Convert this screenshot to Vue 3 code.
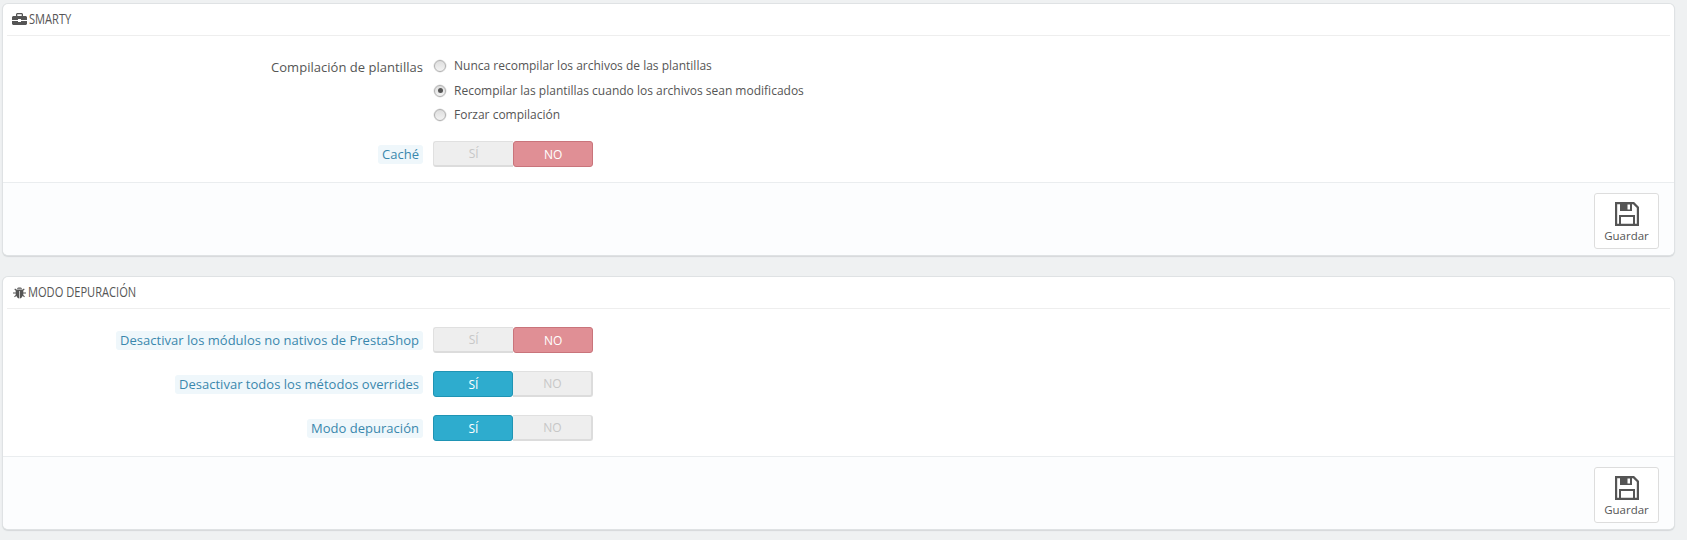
<script setup>
const forms = [
  {
    title: 'SMARTY', icon: 'case', formHeight: 'smarty',
    rows: [
      { label: 'Compilación de plantillas', radios: ['Nunca recompilar los archivos de las plantillas', 'Recompilar las plantillas cuando los archivos sean modificados', 'Forzar compilación'], selected: 1 },
      { label: 'Caché', hint: true, on: false },
    ],
  },
  {
    title: 'MODO DEPURACIÓN', icon: 'bug', formHeight: 'debug',
    rows: [
      { label: 'Desactivar los módulos no nativos de PrestaShop', hint: true, on: false },
      { label: 'Desactivar todos los métodos overrides', hint: true, on: true },
      { label: 'Modo depuración', hint: true, on: true },
    ],
  },
]
</script>

<template>
  <div class="page">
    <section v-for="f in forms" :key="f.title" class="panel">
      <header class="head">
        <svg v-if="f.icon === 'case'" class="hicon" viewBox="0 0 15 12" width="15" height="12">
          <path fill="#555" d="M5 0h5l1 1v2h3l1 1v3H9V6H6v1H0V4l1-1h3V1zM5.300 1.200V3h4.400V1.200zM0 8h6v1h3V8h6v3l-1 1H1l-1-1z"/>
        </svg>
        <svg v-else class="hicon bug" viewBox="0 0 12 12" width="13" height="13">
          <path fill="#555" d="M3.500 2.500C4 1 8 1 8.500 2.500zM3 3.300h6l1-1 .8.700L9.500 4.300V6H12v1H9.500v1.200L11 9.700l-.8.700L9 9c-.5 1.500-1.800 2.500-2.700 2.600V4.500h-.6v7.100C4.800 11.500 3.500 10.500 3 9l-1.200 1.400-.8-.7 1.500-1.500V7H0V6h2.500V4.300L1.200 3 2 2.300z"/>
        </svg>
        <span class="title">{{ f.title }}</span>
      </header>
      <div class="body" :class="f.formHeight">
        <div v-for="r in f.rows" :key="r.label" class="row" :class="{ radiorow: r.radios }">
          <div class="labelcol"><span class="label" :class="{ hint: r.hint }">{{ r.label }}</span></div>
          <div v-if="r.radios" class="radios">
            <label v-for="(t, i) in r.radios" :key="t" class="radio">
              <span class="dot" :class="{ sel: i === r.selected }"></span>{{ t }}
            </label>
          </div>
          <div v-else class="switch">
            <span class="seg" :class="r.on ? 'yes' : 'off offr'">SÍ</span>
            <span class="seg" :class="r.on ? 'off offl' : 'no'">NO</span>
          </div>
        </div>
      </div>
      <footer class="foot">
        <button class="save" type="button">
          <svg viewBox="0 0 24 24" width="24" height="24">
            <path fill="none" stroke="#555" stroke-width="2.200" d="M1.100 1.100h17.500l4.300 4.300v17.500H1.100z"/>
            <path fill="#555" d="M5 1h12v8H5z"/>
            <path fill="#fff" d="M12.500 2.500h2.500v5h-2.500z"/>
            <path fill="none" stroke="#555" stroke-width="2" d="M5 22.500V14h14v8.500"/>
          </svg>
          <span>Guardar</span>
        </button>
      </footer>
    </section>
  </div>
</template>

<style>
html, body { margin: 0; background: #eff1f2; }
</style>

<style scoped>
.page {
  height: 540px;
  box-sizing: border-box;
  padding: 4px 13px 0 3px;
  font-family: "Open Sans", sans-serif;
  color: #555;
  overflow: hidden;
}
.panel {
  background: #fff;
  border-radius: 5px;
  box-shadow: 0 0 0 1px #dfe2e4, 0 1px 1px 1px #d5d8da;
  margin-bottom: 22px;
  overflow: hidden;
}
.head {
  height: 31px;
  margin: 0 4px;
  padding-left: 5px;
  border-bottom: 1px solid #eee;
  display: flex;
  align-items: center;
  gap: 2px;
}
.hicon { flex: none; margin-top: -1px; }
.hicon.bug { margin-left: 1px; }
.title {
  font-size: 15px;
  color: #555;
  display: inline-block;
  margin-top: -3px;
  transform: scaleX(0.74);
  transform-origin: left center;
  white-space: nowrap;
}
.body { box-sizing: border-box; }
.body.smarty { height: 146px; padding-top: 20px; }
.body.debug { height: 147px; padding-top: 18px; }
.row {
  display: flex;
  align-items: center;
  height: 26px;
  margin-bottom: 18px;
}
.radiorow { align-items: flex-start; height: auto; margin-bottom: 15.500px; }
.labelcol {
  width: 420px;
  flex: none;
  text-align: right;
  font-size: 13px;
  letter-spacing: 0.020px;
}
.label { padding: 0 4px 1px; line-height: 18px; display: inline-block; vertical-align: middle; }
.radiorow .label { padding: 1px 0 0; }
.hint {
  background: #eff7fb;
  color: #3a87ad;
  border-radius: 3px;
}
.radios {
  margin-left: 10px;
  display: flex;
  flex-direction: column;
  gap: 4px;
}
.radio {
  display: flex;
  align-items: center;
  font-size: 12px;
  line-height: 20.500px;
  color: #555;
}
.dot {
  width: 10px;
  height: 10px;
  border-radius: 50%;
  border: 1px solid #b0b0b0;
  box-shadow: 0 0 0 0.500px #ddd;
  background: linear-gradient(#dedede, #f3f3f3);
  margin-right: 8px;
  margin-left: 1px;
  flex: none;
  position: relative;
}
.dot.sel::after {
  content: "";
  position: absolute;
  left: 2.500px;
  top: 2.500px;
  width: 5px;
  height: 5px;
  border-radius: 50%;
  background: #555;
}
.switch {
  margin-left: 10px;
  display: flex;
  width: 160px;
  height: 26px;
  border-radius: 3px;
  box-sizing: border-box;
}
.seg {
  flex: 1;
  display: flex;
  align-items: center;
  justify-content: center;
  font-size: 12px;
  box-sizing: border-box;
  padding-left: 1px;
}
.off {
  background: #eee;
  color: #c7c7c7;
  border-top: 1px solid #e0e0e0;
  border-bottom: 2px solid #dcdcdc;
}
.offr { border-left: 1px solid #e0e0e0; border-radius: 3px 0 0 3px; }
.offl { border-right: 2px solid #dcdcdc; border-radius: 0 3px 3px 0; }
.no {
  background: #e08f95;
  color: #fff;
  border: 1px solid #c9747b;
  border-radius: 3px;
}
.yes {
  background: #2eacce;
  color: #fff;
  border: 1px solid #1f94b4;
  border-radius: 3px;
}
.foot {
  height: 73px;
  box-sizing: border-box;
  background: #fcfdfe;
  border-top: 1px solid #eaedef;
  display: flex;
  justify-content: flex-end;
  align-items: flex-start;
  padding: 10px 15px 0 0;
}
.save {
  width: 65px;
  height: 56px;
  box-sizing: border-box;
  background: #fff;
  border: 1px solid #ddd;
  border-radius: 3px;
  padding: 8px 0 0;
  display: flex;
  flex-direction: column;
  align-items: center;
  gap: 2px;
  font-family: "Open Sans", sans-serif;
  font-size: 11.500px;
  color: #555;
}
</style>
